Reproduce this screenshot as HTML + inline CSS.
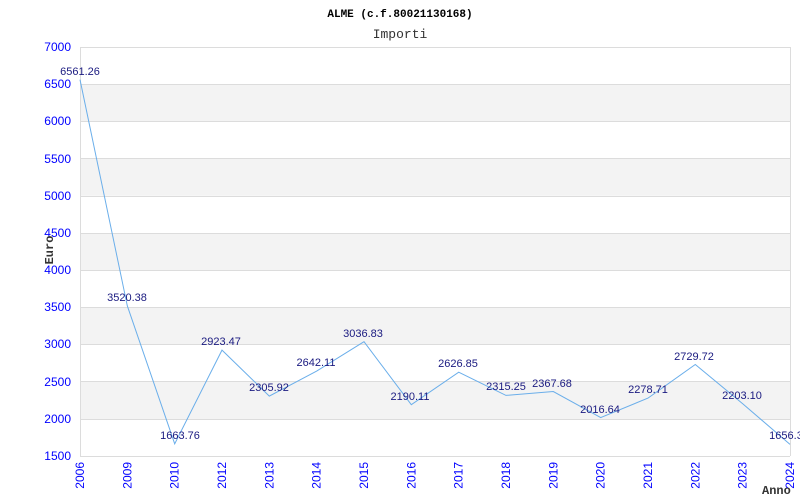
<!DOCTYPE html>
<html><head><meta charset="utf-8"><style>body{margin:0;background:#fff}svg{display:block}</style></head><body>
<svg width="800" height="500" xmlns="http://www.w3.org/2000/svg" font-family="Liberation Sans, sans-serif">
<rect width="800" height="500" fill="#fff"/>
<g fill="#f3f3f3">
<rect x="80" y="84.2" width="710" height="37.2"/>
<rect x="80" y="158.6" width="710" height="37.2"/>
<rect x="80" y="233" width="710" height="37.2"/>
<rect x="80" y="307.4" width="710" height="37.2"/>
<rect x="80" y="381.8" width="710" height="37.2"/>
</g>
<g stroke="#dcdcdc" stroke-width="1">
<line x1="80" x2="790" y1="47.5" y2="47.5"/><line x1="80" x2="790" y1="84.5" y2="84.5"/><line x1="80" x2="790" y1="121.5" y2="121.5"/><line x1="80" x2="790" y1="158.5" y2="158.5"/><line x1="80" x2="790" y1="196.5" y2="196.5"/><line x1="80" x2="790" y1="233.5" y2="233.5"/><line x1="80" x2="790" y1="270.5" y2="270.5"/><line x1="80" x2="790" y1="307.5" y2="307.5"/><line x1="80" x2="790" y1="344.5" y2="344.5"/><line x1="80" x2="790" y1="381.5" y2="381.5"/><line x1="80" x2="790" y1="419.5" y2="419.5"/><line x1="80" x2="790" y1="456.5" y2="456.5"/>
<line x1="80.5" x2="80.5" y1="47" y2="456"/><line x1="790.5" x2="790.5" y1="47" y2="456"/>
</g>
<polyline fill="none" stroke="#6aaeea" stroke-width="1" points="80,79.6 127.3,305.8 174.7,443.8 222,350.1 269.3,396.1 316.7,371.1 364,341.7 411.3,404.7 458.7,372.2 506,395.4 553.3,391.5 600.7,417.6 648,398.1 695.3,364.5 742.7,403.7 790,444.4"/>
<text x="400" y="17" text-anchor="middle" font-family="Liberation Mono, monospace" font-weight="bold" font-size="11">ALME (c.f.80021130168)</text>
<text x="400" y="38" text-anchor="middle" font-family="Liberation Mono, monospace" font-size="13" fill="#333">Importi</text>
<g fill="#00f" font-size="12" text-anchor="end">
<text x="71" y="51">7000</text><text x="71" y="88">6500</text><text x="71" y="125">6000</text><text x="71" y="163">5500</text><text x="71" y="200">5000</text><text x="71" y="237">4500</text><text x="71" y="274">4000</text><text x="71" y="311">3500</text><text x="71" y="348">3000</text><text x="71" y="386">2500</text><text x="71" y="423">2000</text><text x="71" y="460">1500</text>
</g>
<text transform="translate(53,250) rotate(-90)" text-anchor="middle" font-family="Liberation Mono, monospace" font-weight="bold" font-size="12" fill="#333">Euro</text>
<text x="762" y="494" font-family="Liberation Mono, monospace" font-weight="bold" font-size="12" fill="#333">Anno</text>
<g fill="#00f" font-size="12" text-anchor="end">
<text transform="translate(84,462) rotate(-90)">2006</text><text transform="translate(131.3,462) rotate(-90)">2009</text><text transform="translate(178.7,462) rotate(-90)">2010</text><text transform="translate(226,462) rotate(-90)">2012</text><text transform="translate(273.3,462) rotate(-90)">2013</text><text transform="translate(320.7,462) rotate(-90)">2014</text><text transform="translate(368,462) rotate(-90)">2015</text><text transform="translate(415.3,462) rotate(-90)">2016</text><text transform="translate(462.7,462) rotate(-90)">2017</text><text transform="translate(510,462) rotate(-90)">2018</text><text transform="translate(557.3,462) rotate(-90)">2019</text><text transform="translate(604.7,462) rotate(-90)">2020</text><text transform="translate(652,462) rotate(-90)">2021</text><text transform="translate(699.3,462) rotate(-90)">2022</text><text transform="translate(746.7,462) rotate(-90)">2023</text><text transform="translate(794,462) rotate(-90)">2024</text>
</g>
<g fill="#1a1a80" font-size="11" text-anchor="middle">
<text x="80" y="75">6561.26</text><text x="127" y="301">3520.38</text><text x="180" y="439">1663.76</text><text x="221" y="345">2923.47</text><text x="269" y="391">2305.92</text><text x="316" y="366">2642.11</text><text x="363" y="337">3036.83</text><text x="410" y="400">2190.11</text><text x="458" y="367">2626.85</text><text x="506" y="390">2315.25</text><text x="552" y="387">2367.68</text><text x="600" y="413">2016.64</text><text x="648" y="393">2278.71</text><text x="694" y="360">2729.72</text><text x="742" y="399">2203.10</text><text x="786" y="439">1656.3</text>
</g>
</svg>
</body></html>
